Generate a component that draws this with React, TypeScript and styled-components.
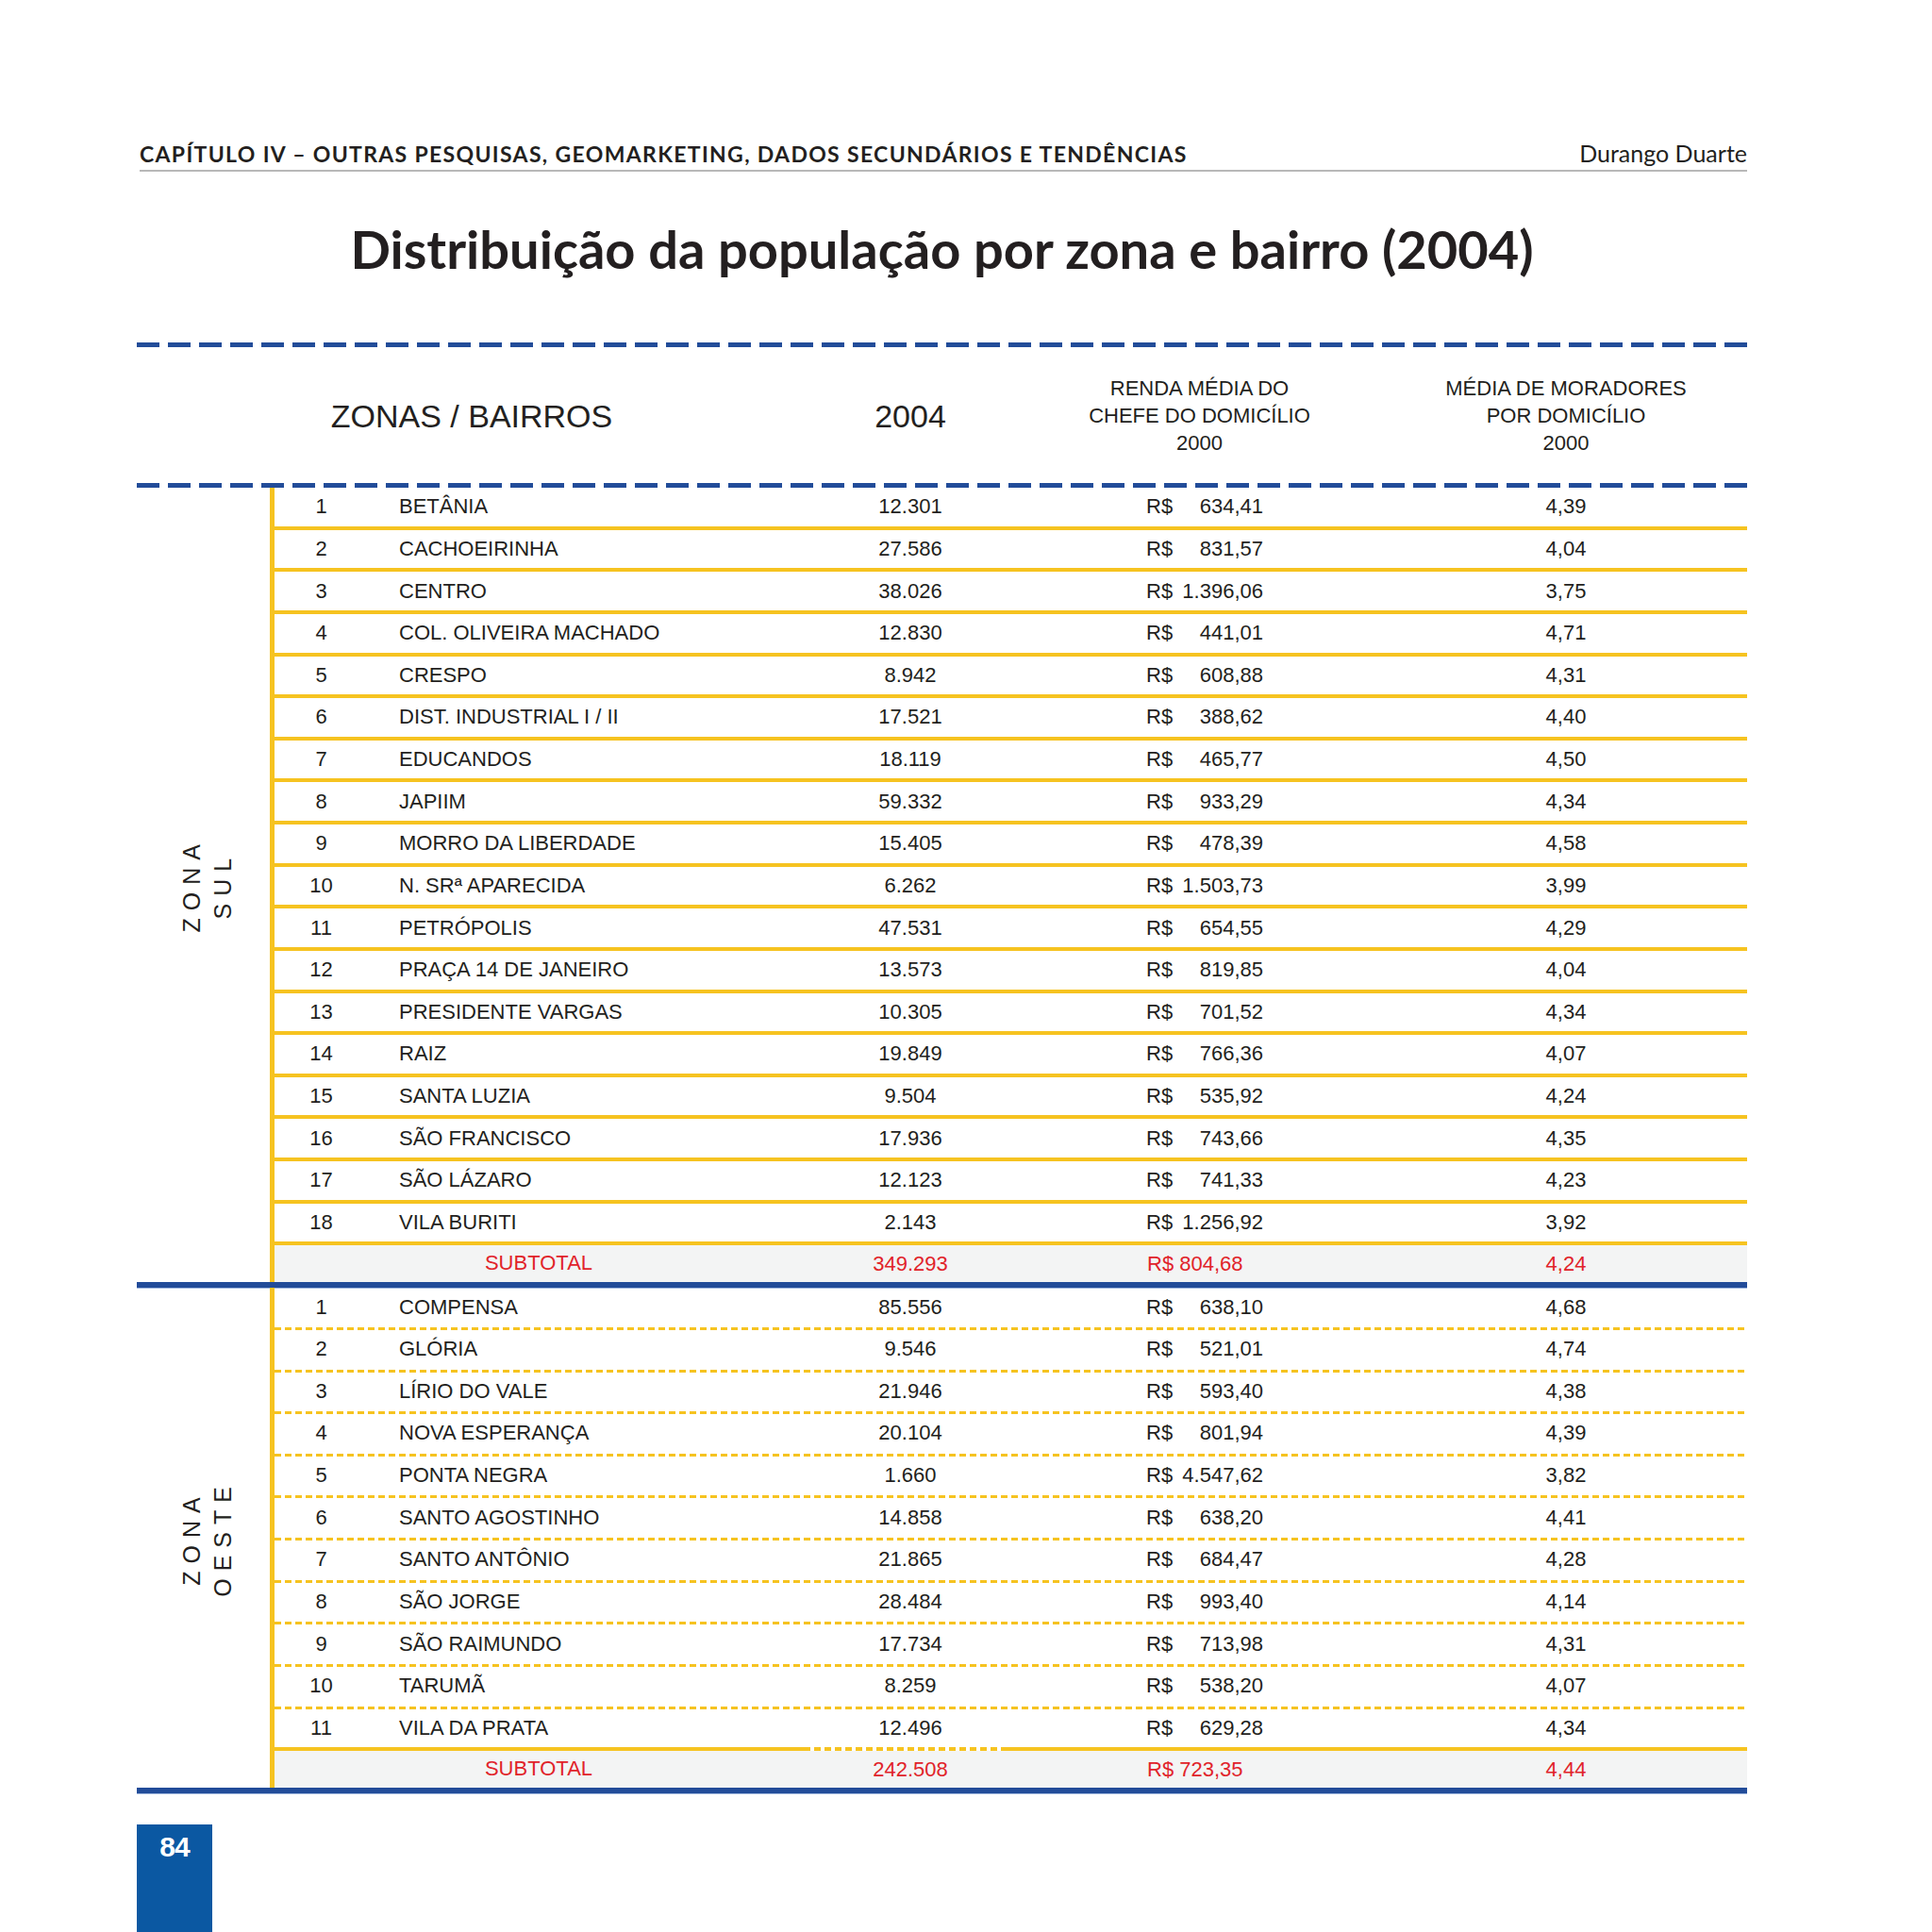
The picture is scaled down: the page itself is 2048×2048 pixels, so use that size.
import React from "react";
import styled, { createGlobalStyle } from "styled-components";

const YELLOW = "#f6c320";
const BLUE = "#224c99";
const INK = "#231f20";
const RED = "#e1232a";

const GlobalStyle = createGlobalStyle`
  html, body { margin: 0; padding: 0; background: #ffffff; }
  body { width: 2048px; height: 2048px; overflow: hidden; }
  * { box-sizing: border-box; }
`;

const Page = styled.div`
  width: 2048px;
  height: 2048px;
  padding: 150px 196px 0 145px;
  display: flex;
  flex-direction: column;
  background: #fff;
`;

const RunningHead = styled.header`
  margin-left: 3px;
  display: flex;
  justify-content: space-between;
  align-items: baseline;
  border-bottom: 2px solid #b8b8b8;
  padding-bottom: 5px;
  font-family: "Lato", "Open Sans", sans-serif;
  color: ${INK};
  line-height: 24px;
`;

const Chapter = styled.span`
  font-weight: 700;
  font-size: 23px;
  letter-spacing: 1.33px;
`;

const Author = styled.span`
  font-weight: 400;
  font-size: 25px;
`;

const Title = styled.h1`
  margin: 53px 0 0;
  text-align: center;
  font-family: "Lato", "Open Sans", sans-serif;
  font-weight: 700;
  font-size: 56px;
  line-height: 57px;
  color: ${INK};
`;

const Table = styled.section`
  margin-top: 71px;
  display: flex;
  flex-direction: column;
  font-family: "Liberation Sans", Arial, sans-serif;
  color: ${INK};
`;

const BlueDash = styled.div`
  height: 5px;
  background: repeating-linear-gradient(
    to right,
    ${BLUE} 0 24px,
    transparent 24px 33px
  );
`;

const BlueRule = styled.div`
  height: 6px;
  background: ${BLUE};
  box-shadow: 0 1px 0 #9fb6dd;
`;

const HeadRow = styled.div`
  height: 144px;
  display: grid;
  grid-template-columns: 710px 220px 393px 384px;
  align-items: center;
`;

const HeadCell = styled.div<{ $big?: boolean }>`
  text-align: center;
  font-size: ${(p) => (p.$big ? "34px" : "22px")};
  line-height: ${(p) => (p.$big ? "36px" : "29px")};
  padding-top: ${(p) => (p.$big ? "2px" : "0")};
`;

const ZoneSection = styled.div`
  display: flex;
`;

const ZoneLabel = styled.div`
  width: 141px;
  display: flex;
  align-items: center;
  justify-content: center;
  padding-left: 8px;
`;

const VerticalText = styled.div`
  writing-mode: vertical-rl;
  transform: rotate(180deg);
  font-size: 25px;
  line-height: 33px;
  letter-spacing: 8px;
  text-align: center;
  color: ${INK};
`;

const RowsColumn = styled.div`
  flex: 1;
  border-left: 5px solid ${YELLOW};
  display: flex;
  flex-direction: column;
`;

type LineKind = "solid" | "dashed" | "mixed";

const lineBg = (k: LineKind) => {
  if (k === "solid") return `background: ${YELLOW}; height: 4px;`;
  const dashed = `repeating-linear-gradient(to right, ${YELLOW} 0 7px, transparent 7px 11px)`;
  if (k === "dashed") return `background: ${dashed}; height: 3px;`;
  return `height: 4px; background: linear-gradient(to right, ${YELLOW} 0 566px, transparent 566px 773px, ${YELLOW} 773px), ${dashed};`;
};

const Row = styled.div<{ $line: LineKind }>`
  position: relative;
  height: 44.64px;
  display: grid;
  grid-template-columns: 99px 465px 220px 393px 384px;
  align-items: center;
  font-size: 22px;
  padding-bottom: 4px;
  &::after {
    content: "";
    position: absolute;
    left: 0;
    right: 0;
    bottom: 0;
    ${(p) => lineBg(p.$line)}
  }
`;

const Num = styled.div`
  text-align: center;
`;

const Name = styled.div`
  padding-left: 33px;
  white-space: nowrap;
`;

const Center = styled.div`
  text-align: center;
`;

const Money = styled.div`
  padding-left: 140px;
`;

const MoneyInner = styled.div`
  width: 124px;
  display: flex;
  justify-content: space-between;
`;

const SubRow = styled.div`
  height: 39px;
  display: grid;
  grid-template-columns: 564px 220px 393px 384px;
  align-items: center;
  background: #f3f4f4;
  color: ${RED};
  font-size: 22px;
`;

const SubLabel = styled.div`
  text-align: center;
  padding-right: 4px;
  margin-top: -2px;
`;

const SubMoney = styled.div`
  padding-left: 141px;
`;

const PageNumber = styled.div`
  margin-top: 33px;
  width: 80px;
  flex: 1;
  background: #0b58a2;
  color: #fff;
  font-family: "Liberation Sans", Arial, sans-serif;
  font-weight: 700;
  font-size: 30px;
  letter-spacing: -1px;
  text-align: center;
  padding-top: 7px;
`;

type Item = [string, string, string, string, string];

const sul: Item[] = [
  ["1", "BETÂNIA", "12.301", "634,41", "4,39"],
  ["2", "CACHOEIRINHA", "27.586", "831,57", "4,04"],
  ["3", "CENTRO", "38.026", "1.396,06", "3,75"],
  ["4", "COL. OLIVEIRA MACHADO", "12.830", "441,01", "4,71"],
  ["5", "CRESPO", "8.942", "608,88", "4,31"],
  ["6", "DIST. INDUSTRIAL I / II", "17.521", "388,62", "4,40"],
  ["7", "EDUCANDOS", "18.119", "465,77", "4,50"],
  ["8", "JAPIIM", "59.332", "933,29", "4,34"],
  ["9", "MORRO DA LIBERDADE", "15.405", "478,39", "4,58"],
  ["10", "N. SRª APARECIDA", "6.262", "1.503,73", "3,99"],
  ["11", "PETRÓPOLIS", "47.531", "654,55", "4,29"],
  ["12", "PRAÇA 14 DE JANEIRO", "13.573", "819,85", "4,04"],
  ["13", "PRESIDENTE VARGAS", "10.305", "701,52", "4,34"],
  ["14", "RAIZ", "19.849", "766,36", "4,07"],
  ["15", "SANTA LUZIA", "9.504", "535,92", "4,24"],
  ["16", "SÃO FRANCISCO", "17.936", "743,66", "4,35"],
  ["17", "SÃO LÁZARO", "12.123", "741,33", "4,23"],
  ["18", "VILA BURITI", "2.143", "1.256,92", "3,92"],
];

const oeste: Item[] = [
  ["1", "COMPENSA", "85.556", "638,10", "4,68"],
  ["2", "GLÓRIA", "9.546", "521,01", "4,74"],
  ["3", "LÍRIO DO VALE", "21.946", "593,40", "4,38"],
  ["4", "NOVA ESPERANÇA", "20.104", "801,94", "4,39"],
  ["5", "PONTA NEGRA", "1.660", "4.547,62", "3,82"],
  ["6", "SANTO AGOSTINHO", "14.858", "638,20", "4,41"],
  ["7", "SANTO ANTÔNIO", "21.865", "684,47", "4,28"],
  ["8", "SÃO JORGE", "28.484", "993,40", "4,14"],
  ["9", "SÃO RAIMUNDO", "17.734", "713,98", "4,31"],
  ["10", "TARUMÃ", "8.259", "538,20", "4,07"],
  ["11", "VILA DA PRATA", "12.496", "629,28", "4,34"],
];

const Zone: React.FC<{
  lines: [string, string];
  items: Item[];
  kind: "solid" | "dashed";
  lastMixed?: boolean;
  total: [string, string, string];
}> = ({ lines, items, kind, lastMixed, total }) => (
  <ZoneSection>
    <ZoneLabel>
      <VerticalText>
        {lines[0]}
        <br />
        {lines[1]}
      </VerticalText>
    </ZoneLabel>
    <RowsColumn>
      {items.map((it, i) => (
        <Row
          key={it[0]}
          $line={lastMixed && i === items.length - 1 ? "mixed" : kind}
        >
          <Num>{it[0]}</Num>
          <Name>{it[1]}</Name>
          <Center>{it[2]}</Center>
          <Money>
            <MoneyInner>
              <span>R$</span>
              <span>{it[3]}</span>
            </MoneyInner>
          </Money>
          <Center>{it[4]}</Center>
        </Row>
      ))}
      <SubRow>
        <SubLabel>SUBTOTAL</SubLabel>
        <Center>{total[0]}</Center>
        <SubMoney>R$ {total[1]}</SubMoney>
        <Center>{total[2]}</Center>
      </SubRow>
    </RowsColumn>
  </ZoneSection>
);

export default function App() {
  return (
    <>
      <GlobalStyle />
      <Page>
        <RunningHead>
          <Chapter>
            CAPÍTULO IV – OUTRAS PESQUISAS, GEOMARKETING, DADOS SECUNDÁRIOS E
            TENDÊNCIAS
          </Chapter>
          <Author>Durango Duarte</Author>
        </RunningHead>
        <Title>Distribuição da população por zona e bairro (2004)</Title>
        <Table>
          <BlueDash />
          <HeadRow>
            <HeadCell $big>ZONAS / BAIRROS</HeadCell>
            <HeadCell $big>2004</HeadCell>
            <HeadCell>
              RENDA MÉDIA DO
              <br />
              CHEFE DO DOMICÍLIO
              <br />
              2000
            </HeadCell>
            <HeadCell>
              MÉDIA DE MORADORES
              <br />
              POR DOMICÍLIO
              <br />
              2000
            </HeadCell>
          </HeadRow>
          <BlueDash />
          <Zone
            lines={["ZONA", "SUL"]}
            items={sul}
            kind="solid"
            total={["349.293", "804,68", "4,24"]}
          />
          <BlueRule />
          <Zone
            lines={["ZONA", "OESTE"]}
            items={oeste}
            kind="dashed"
            lastMixed
            total={["242.508", "723,35", "4,44"]}
          />
          <BlueRule />
        </Table>
        <PageNumber>84</PageNumber>
      </Page>
    </>
  );
}
